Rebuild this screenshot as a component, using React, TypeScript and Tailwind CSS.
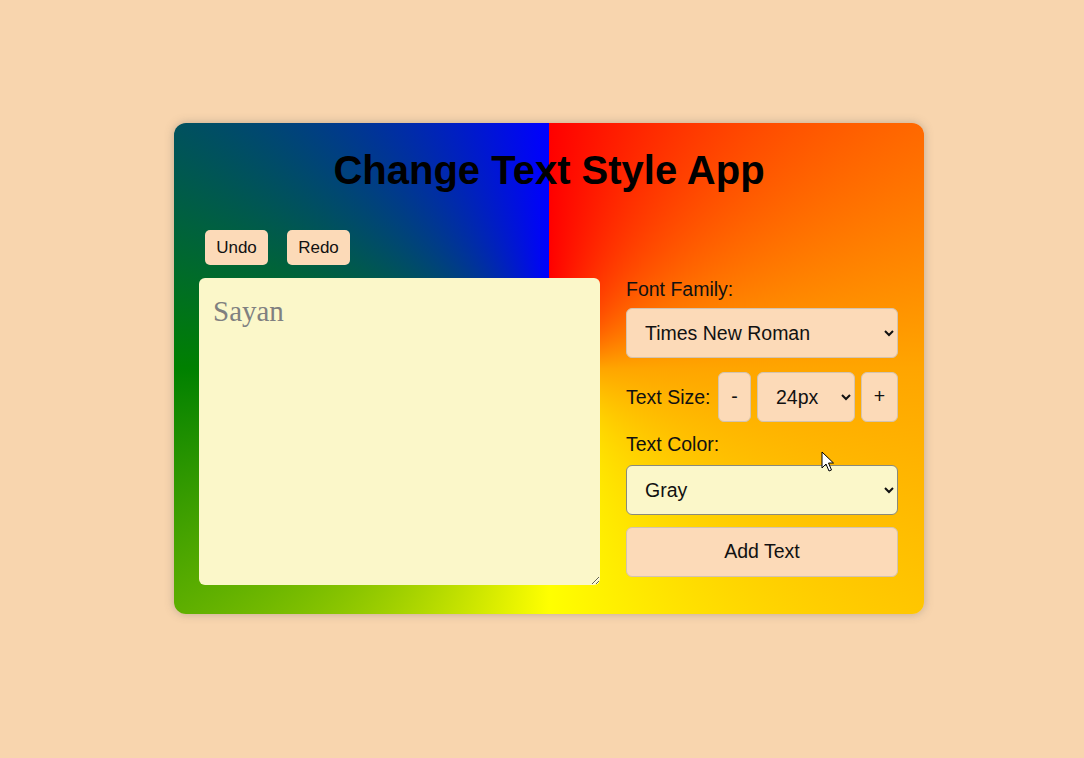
const sans = "font-['Liberation_Sans',Arial,sans-serif]";

const ctl =
  'h-[50px] rounded-[6px] border border-[#d3c3b0] bg-[#fcdab8] text-[19.5px] text-[#111]';

export default function App() {
  return (
    <div className={`min-h-screen bg-[#f8d5ae] pl-[174px] pt-[123px] ${sans}`}>
      <div className="relative h-[491px] w-[750px] rounded-[12px] bg-[conic-gradient(red,orange,yellow,green,blue)] px-[25px] pt-[25px] shadow-[0_0_10px_rgba(90,90,90,0.35)]">
        <h1 className="text-center text-[40px] font-bold leading-[45px] text-black">
          Change Text Style App
        </h1>

        <div className="mt-[37px] flex gap-[19px] pl-[6px]">
          <button className="h-[35px] w-[63px] rounded-[5px] bg-[#fcdab8] text-[17px] text-[#111]">
            Undo
          </button>
          <button className="h-[35px] w-[63px] rounded-[5px] bg-[#fcdab8] text-[17px] text-[#111]">
            Redo
          </button>
        </div>

        <div className="mt-[13px] flex gap-[26px]">
          <textarea
            defaultValue="Sayan"
            className="h-[307px] w-[401px] rounded-[6px] bg-[#fbf7c9] px-[14px] pt-[12px] font-['Liberation_Serif','Times_New_Roman',serif] text-[29px] text-[#808080] outline-none"
          />

          <div className="flex w-[272px] flex-col text-[19.5px] text-[#111]">
            <label className="leading-[22px]">Font Family:</label>
            <select className={`mt-[8px] w-full pl-[14px] pr-[10px] ${ctl}`} defaultValue="tnr">
              <option value="tnr">Times New Roman</option>
              <option value="arial">Arial</option>
            </select>

            <div className="mt-[14px] flex h-[50px] items-center gap-[6px]">
              <span className="w-[86px] leading-[22px]">Text Size:</span>
              <button className={`w-[33px] ${ctl}`}>-</button>
              <select className={`w-[98px] pl-[14px] pr-[5px] ${ctl}`} defaultValue="24">
                <option value="24">24px</option>
                <option value="28">28px</option>
              </select>
              <button className={`w-[37px] ${ctl}`}>+</button>
            </div>

            <label className="mt-[11px] leading-[22px]">Text Color:</label>
            <select
              className="mt-[10px] h-[50px] w-full rounded-[6px] border border-[#8a8a7a] bg-[#fbf7c9] pl-[14px] pr-[10px] text-[19.5px] text-[#111]"
              defaultValue="gray"
            >
              <option value="gray">Gray</option>
              <option value="black">Black</option>
            </select>

            <button className={`mt-[12px] w-full ${ctl}`}>Add Text</button>
          </div>
        </div>

        {/* mouse pointer caught in the screenshot */}
        <svg
          className="absolute left-[647px] top-[328px]"
          width="14"
          height="22"
          viewBox="0 0 14 22"
        >
          <path
            d="M1 1 L1 17 L5 13 L8 20 L10.5 19 L7.5 12 L12.5 12 Z"
            fill="white"
            stroke="black"
            strokeWidth="1"
            strokeLinejoin="round"
          />
        </svg>
      </div>
    </div>
  );
}
